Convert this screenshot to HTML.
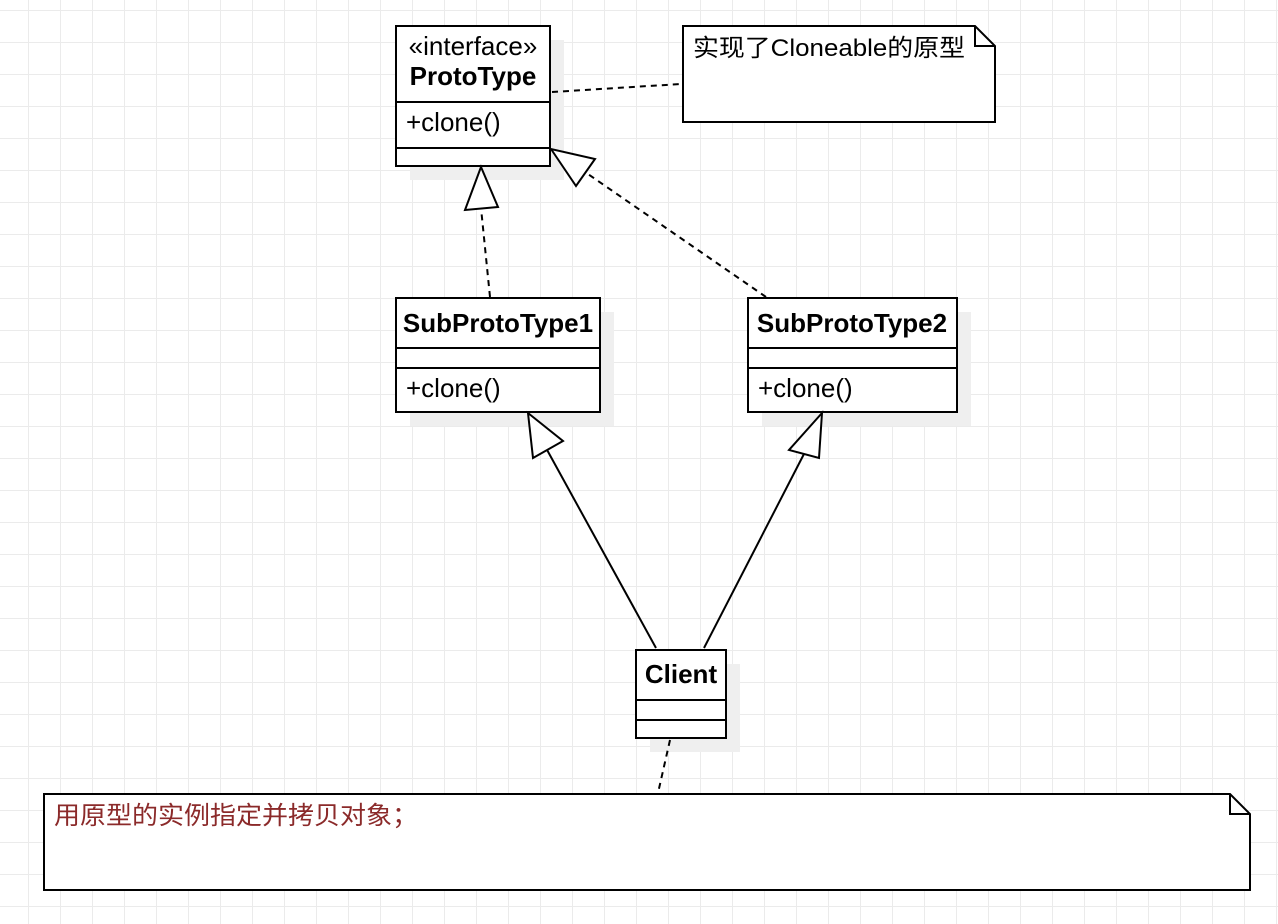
<!DOCTYPE html>
<html><head><meta charset="utf-8"><style>
html,body{margin:0;padding:0;background:#fff;}
svg{display:block;}
text{font-family:"Liberation Sans","Noto Sans CJK SC",sans-serif;}
</style></head><body>
<svg width="1278" height="924" viewBox="0 0 1278 924" xmlns="http://www.w3.org/2000/svg">
<defs>
<pattern id="g" x="28" y="10" width="32" height="32" patternUnits="userSpaceOnUse">
<path d="M0 0H32M0 0V32" stroke="#ebebeb" stroke-width="2" fill="none"/>
</pattern>
</defs>
<rect width="1278" height="924" fill="url(#g)"/>
<g fill="#efefef">
<rect x="410" y="40" width="154" height="140"/>
<rect x="410" y="312" width="204" height="114"/>
<rect x="762" y="312" width="209" height="114"/>
<rect x="650" y="664" width="90" height="88"/>
</g>
<g stroke="#000" stroke-width="2" fill="#fff">
<rect x="396" y="26" width="154" height="140"/>
<line x1="396" y1="102" x2="550" y2="102"/>
<line x1="396" y1="148" x2="550" y2="148"/>
<rect x="396" y="298" width="204" height="114"/>
<line x1="396" y1="348" x2="600" y2="348"/>
<line x1="396" y1="368" x2="600" y2="368"/>
<rect x="748" y="298" width="209" height="114"/>
<line x1="748" y1="348" x2="957" y2="348"/>
<line x1="748" y1="368" x2="957" y2="368"/>
<rect x="636" y="650" width="90" height="88"/>
<line x1="636" y1="700" x2="726" y2="700"/>
<line x1="636" y1="720" x2="726" y2="720"/>
<path d="M683 26H975L995 46V122H683Z"/>
<path d="M975 26V46H995" fill="none"/>
<path d="M44 794H1230L1250 814V890H44Z"/>
<path d="M1230 794V814H1250" fill="none"/>
</g>
<g stroke="#000" stroke-width="2" fill="none">
<line x1="490" y1="297" x2="481" y2="208" stroke-dasharray="6,5"/>
<line x1="766" y1="297" x2="585" y2="172" stroke-dasharray="6,5"/>
<line x1="552" y1="92" x2="681" y2="84" stroke-dasharray="6,5"/>
<line x1="670" y1="740" x2="658" y2="793" stroke-dasharray="6,5"/>
<line x1="656" y1="648" x2="546" y2="448"/>
<line x1="704" y1="648" x2="805" y2="452"/>
</g>
<g stroke="#000" stroke-width="2" fill="#fff">
<path d="M481 167L465 210L498 207Z"/>
<path d="M551 149L576 186L595 159Z"/>
<path d="M528 413L533 458L563 441Z"/>
<path d="M822 413L789 450L819 458Z"/>
</g>
<g font-size="26" fill="#000">
<text x="473" y="55" text-anchor="middle">«interface»</text>
<text x="473" y="85" text-anchor="middle" font-weight="bold">ProtoType</text>
<text x="406" y="131">+clone()</text>
<text x="498" y="332" text-anchor="middle" font-weight="bold">SubProtoType1</text>
<text x="406" y="397">+clone()</text>
<text x="852" y="332" text-anchor="middle" font-weight="bold">SubProtoType2</text>
<text x="758" y="397">+clone()</text>
<text x="681" y="683" text-anchor="middle" font-weight="bold">Client</text>
<text x="693" y="56" font-size="24" textLength="272" lengthAdjust="spacingAndGlyphs">实现了Cloneable的原型</text>
<text x="54" y="824" font-size="25" fill="#8b2a2a" textLength="364" lengthAdjust="spacingAndGlyphs">用原型的实例指定并拷贝对象；</text>
</g>
</svg>
</body></html>
